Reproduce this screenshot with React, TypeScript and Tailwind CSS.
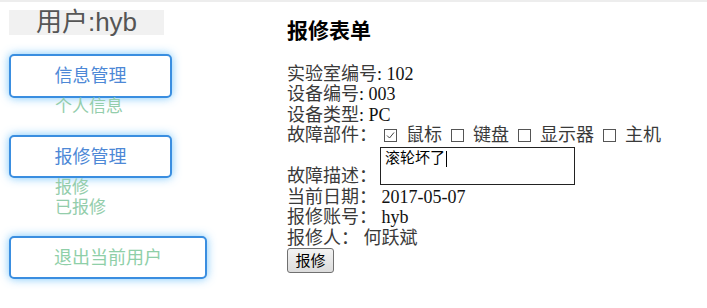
import React from 'react'

const sans = "font-['Liberation_Sans','Noto_Sans_CJK_SC',sans-serif]"
const serif = "font-['Liberation_Serif','Noto_Sans_CJK_SC',serif]"

// left nav button look: blue border with a soft glow
const navBtn =
  'flex items-center justify-center bg-white border-2 border-[#3a8ee0] rounded-[5px] shadow-[0_0_10px_rgba(90,185,250,0.8)] text-[18px] leading-none'

function Checkbox({ checked = false }: { checked?: boolean }) {
  return (
    <span className="inline-flex w-[13px] h-[13px] shrink-0 border border-[#555] bg-white items-center justify-center">
      {checked && (
        <svg width="9" height="9" viewBox="0 0 9 9" fill="none">
          <path d="M1 4.5l2.5 2.5L8 1.5" stroke="#444" strokeWidth="1" />
        </svg>
      )}
    </span>
  )
}

export default function App() {
  const parts = [
    { name: '鼠标', checked: true },
    { name: '键盘', checked: false },
    { name: '显示器', checked: false },
    { name: '主机', checked: false },
  ]

  return (
    <div className="w-[707px] h-[308px] bg-white border-t-2 border-[#ededed] flex overflow-hidden">
      {/* Sidebar */}
      <aside className={`w-[287px] shrink-0 pl-[9px] pt-[8px] flex flex-col items-start ${sans}`}>
        <div className="w-[155px] h-[25px] bg-[#f1f1f1] text-[26px] leading-[25px] text-[#555] text-center">
          用户:hyb
        </div>

        <div className={`${navBtn} mt-[19px] w-[163px] h-[44px] text-[#4d88d6]`}>信息管理</div>
        <div className="pl-[46px] text-[17px] leading-[18px] text-[#93cdab]">个人信息</div>

        <div className={`${navBtn} mt-[19px] w-[163px] h-[43px] text-[#4d88d6]`}>报修管理</div>
        <div className="pl-[46px] text-[17px] leading-[20px] text-[#93cdab]">
          <div>报修</div>
          <div>已报修</div>
        </div>

        <div className={`${navBtn} mt-[18px] w-[198px] h-[43px] text-[#8fcfa8]`}>退出当前用户</div>
      </aside>

      {/* Repair form */}
      <main className={`flex-1 pt-[17px] text-[18px] leading-[20.5px] text-[#111] ${serif}`}>
        <h3 className="text-[21px] leading-[24px] font-bold text-black">报修表单</h3>

        <div className="mt-[20.5px]">
          <div><span className="text-[#3a3a3a]">实验室编号</span>: 102</div>
          <div><span className="text-[#3a3a3a]">设备编号</span>: 003</div>
          <div><span className="text-[#3a3a3a]">设备类型</span>: PC</div>

          <div className="flex items-center h-[20.5px] text-[#3a3a3a]">
            <span>故障部件：</span>
            <span className="flex items-center ml-[7px]">
              {parts.map((p, i) => (
                <span key={p.name} className={`flex items-center ${i > 0 ? 'ml-[9px]' : ''}`}>
                  <Checkbox checked={p.checked} />
                  <span className="ml-[9px]">{p.name}</span>
                </span>
              ))}
            </span>
          </div>

          <div className="flex items-end h-[41px]">
            <span className="text-[#3a3a3a]">故障描述：</span>
            <div className={`ml-[3px] mb-[1.5px] w-[195px] h-[38px] border border-[#222] pl-[4px] pt-[1px] text-[15px] leading-[18px] text-black ${sans}`}>
              滚轮坏了<span className="inline-block w-px h-[16px] bg-black align-middle ml-px" />
            </div>
          </div>

          <div><span className="text-[#3a3a3a]">当前日期：</span> 2017-05-07</div>
          <div><span className="text-[#3a3a3a]">报修账号：</span> hyb</div>
          <div className="text-[#3a3a3a]">报修人： 何跃斌</div>
        </div>

        <button
          className={`w-[47px] h-[25px] border border-[#707070] rounded-[3px] bg-gradient-to-b from-[#f3f3f3] to-[#dcdcdc] text-[15px] leading-none text-black ${sans}`}
        >
          报修
        </button>
      </main>
    </div>
  )
}
